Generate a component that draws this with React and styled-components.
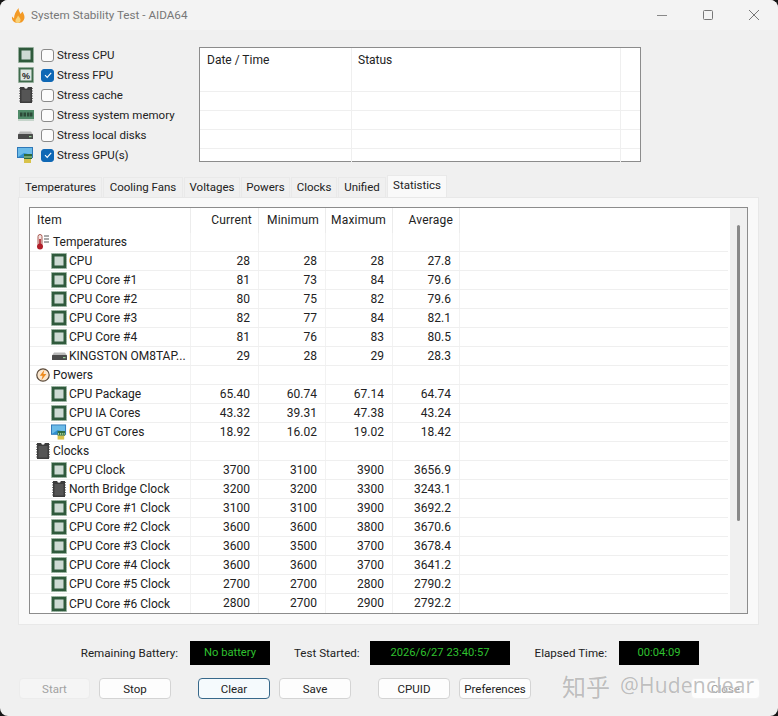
import React from 'react'
import styled, { createGlobalStyle } from 'styled-components'

const Global = createGlobalStyle`
html, body { margin: 0; padding: 0; background: #161616; }
body { font-family: Roboto, "Liberation Sans", sans-serif; font-size: 12px; color: #222; }
* { box-sizing: border-box; }
`

const CpuIcon = ({ size = 16 }) => (
  <svg width={size} height={size} viewBox="0 0 16 16">
    <rect x="0.5" y="0.5" width="15" height="15" fill="#3f6b4c" />
    <rect x="0" y="0" width="16" height="16" fill="none" stroke="#8fae96" strokeWidth="1" strokeDasharray="1 1" />
    <rect x="1" y="1" width="14" height="14" fill="#2f5a3c" />
    <rect x="3.5" y="3.5" width="9" height="9" fill="#cddad3" />
  </svg>
)

const FpuIcon = () => (
  <svg width="16" height="16" viewBox="0 0 16 16">
    <rect x="0.5" y="0.5" width="15" height="15" fill="#3f6b4c" />
    <rect x="0" y="0" width="16" height="16" fill="none" stroke="#8fae96" strokeWidth="1" strokeDasharray="1 1" />
    <rect x="2.5" y="2.5" width="11" height="11" fill="#dfe7e2" />
    <text x="8" y="11.5" fontSize="9" fontWeight="700" textAnchor="middle" fill="#222" fontFamily="Liberation Sans">%</text>
  </svg>
)

const ChipIcon = () => (
  <svg width="14" height="16" viewBox="0 0 14 16">
    <path d="M1 0H5.2A1.8 1.8 0 0 0 8.8 0H13V16H1Z" fill="#3c3c3c" />
    <path d="M0 1.5H1M0 4H1M0 6.5H1M0 9H1M0 11.5H1M0 14H1M13 1.5H14M13 4H14M13 6.5H14M13 9H14M13 11.5H14M13 14H14" stroke="#777" strokeWidth="1" />
    <rect x="2.5" y="3" width="9" height="11.5" fill="#555" />
  </svg>
)

const RamIcon = () => (
  <svg width="16" height="12" viewBox="0 0 16 12">
    <rect x="0" y="1" width="16" height="9" fill="#4f8a68" />
    <path d="M2 3.5h2.5v4H2zM5.5 3.5H8v4H5.5zM9 3.5h2.5v4H9zM12 3.5h2.5v4H12z" fill="#2c4a38" />
    <path d="M1 10v2M3 10v2M5 10v2M7 10v2M9 10v2M11 10v2M13 10v2M15 10v2" stroke="#9ab8a5" strokeWidth="1" />
  </svg>
)

const DiskIcon = () => (
  <svg width="15" height="8" viewBox="0 0 15 8">
    <path d="M2 0.5H13L15 3.5H0Z" fill="#b9b9b9" />
    <rect x="0" y="3" width="15" height="5" rx="0.5" fill="#4a4a4a" />
    <rect x="11" y="5" width="2.5" height="1.2" fill="#9ad29a" />
  </svg>
)

const GpuIcon = () => (
  <svg width="17" height="16" viewBox="0 0 17 16">
    <rect x="0" y="0" width="16" height="11" fill="#2f78b8" />
    <rect x="1" y="1" width="14" height="9" fill="#6bbbe8" />
    <path d="M1 10 L7 6 L15 8 V10Z" fill="#2f8fd0" />
    <rect x="7" y="7" width="8" height="5" fill="#2f6b3c" />
    <path d="M8 9v2M10 9v2M12 9v2M14 9v2" stroke="#b6dfa8" strokeWidth="1" />
    <rect x="7" y="12" width="7" height="4" fill="#d8c24a" />
  </svg>
)

const ThermoIcon = () => (
  <svg width="14" height="16" viewBox="0 0 14 16">
    <rect x="2" y="0.5" width="4" height="11" rx="2" fill="#f3e4e2" stroke="#a8584f" />
    <rect x="3.2" y="5" width="1.6" height="7" fill="#b0202a" />
    <circle cx="4" cy="12.5" r="3" fill="#b0202a" />
    <path d="M8 2h5M8 5h5M8 8h5" stroke="#555" strokeWidth="1" />
  </svg>
)

const PowerIcon = () => (
  <svg width="14" height="14" viewBox="0 0 14 14">
    <circle cx="7" cy="7" r="6.2" fill="#fbe6cd" stroke="#5a4a3a" strokeWidth="1.2" />
    <path d="M8.4 1.8 L3.8 7.8 H6.6 L5.4 12.2 L10.4 6 H7.4Z" fill="#ee8a1c" />
  </svg>
)

const FlameIcon = () => (
  <svg width="14" height="15" viewBox="0 0 14 15">
    <path d="M7 15C2.5 15 0.5 12 1 8.5L3 10.5C3 7 5 3 7.5 0C7.5 3 9 4 9.5 6L11.5 3.5C13.5 7 14 9.5 13 11.5C12 14 10 15 7 15Z" fill="#f39a26" />
    <path d="M7 15C5 15 4 13.5 4.5 12C5 10.5 6.5 9.5 7 7.5C8.5 9.5 10 11 9.5 12.8C9.2 14 8.2 15 7 15Z" fill="#f8d27a" />
  </svg>
)

const icons = {
  cpu: <CpuIcon />,
  fpu: <FpuIcon />,
  chip: <ChipIcon />,
  ram: <RamIcon />,
  disk: <DiskIcon />,
  gpu: <GpuIcon />,
  thermo: <ThermoIcon />,
  power: <PowerIcon />,
}

const stress = [
  ['cpu', 'Stress CPU', false],
  ['fpu', 'Stress FPU', true],
  ['chip', 'Stress cache', false],
  ['ram', 'Stress system memory', false],
  ['disk', 'Stress local disks', false],
  ['gpu', 'Stress GPU(s)', true],
]

const tabs = [
  ['Temperatures', 83],
  ['Cooling Fans', 80],
  ['Voltages', 56],
  ['Powers', 49],
  ['Clocks', 46],
  ['Unified', 48],
  ['Statistics', 60],
]

const rows = [
  ['thermo', 'Temperatures'],
  ['cpu', 'CPU', '28', '28', '28', '27.8'],
  ['cpu', 'CPU Core #1', '81', '73', '84', '79.6'],
  ['cpu', 'CPU Core #2', '80', '75', '82', '79.6'],
  ['cpu', 'CPU Core #3', '82', '77', '84', '82.1'],
  ['cpu', 'CPU Core #4', '81', '76', '83', '80.5'],
  ['disk', 'KINGSTON OM8TAP...', '29', '28', '29', '28.3'],
  ['power', 'Powers'],
  ['cpu', 'CPU Package', '65.40', '60.74', '67.14', '64.74'],
  ['cpu', 'CPU IA Cores', '43.32', '39.31', '47.38', '43.24'],
  ['gpu', 'CPU GT Cores', '18.92', '16.02', '19.02', '18.42'],
  ['chip', 'Clocks'],
  ['cpu', 'CPU Clock', '3700', '3100', '3900', '3656.9'],
  ['chip', 'North Bridge Clock', '3200', '3200', '3300', '3243.1'],
  ['cpu', 'CPU Core #1 Clock', '3100', '3100', '3900', '3692.2'],
  ['cpu', 'CPU Core #2 Clock', '3600', '3600', '3800', '3670.6'],
  ['cpu', 'CPU Core #3 Clock', '3600', '3500', '3700', '3678.4'],
  ['cpu', 'CPU Core #4 Clock', '3600', '3600', '3700', '3641.2'],
  ['cpu', 'CPU Core #5 Clock', '2700', '2700', '2800', '2790.2'],
  ['cpu', 'CPU Core #6 Clock', '2800', '2700', '2900', '2792.2'],
]

const App = () => {
  return (
    <Win>
      <Global />
      <TitleBar>
        <FlameIcon />
        <Title>System Stability Test - AIDA64</Title>
        <Controls>
          <svg width="14" height="14" viewBox="0 0 14 14"><path d="M4 7.5H14" stroke="#888" /></svg>
          <svg width="14" height="14" viewBox="0 0 14 14"><rect x="3.5" y="2.5" width="9" height="9" rx="1" fill="none" stroke="#777" /></svg>
          <svg width="14" height="14" viewBox="0 0 14 14"><path d="M2 2L12 12M12 2L2 12" stroke="#777" /></svg>
        </Controls>
      </TitleBar>

      <TopArea>
        <StressList>
          {stress.map(([icon, label, on]) => (
            <StressRow key={label}>
              <IconSlot>{icons[icon]}</IconSlot>
              <Check $on={on}>
                {on && <svg width="10" height="10" viewBox="0 0 10 10"><path d="M2 5.2L4.2 7.4L8.2 2.8" fill="none" stroke="#fff" strokeWidth="1.1" /></svg>}
              </Check>
              <span>{label}</span>
            </StressRow>
          ))}
        </StressList>
        <LogBox>
          <LogHead>
            <LogCol $w={152}>Date / Time</LogCol>
            <LogCol $w={269}>Status</LogCol>
            <LogCol />
          </LogHead>
          {[0, 1, 2, 3].map(i => (
            <LogRow key={i} $h={i === 3 ? 13 : 19}>
              <LogCol $w={152} />
              <LogCol $w={269} />
              <LogCol />
            </LogRow>
          ))}
        </LogBox>
      </TopArea>

      <TabStrip>
        {tabs.map(([t, w]) => <Tab key={t} $w={w} $active={t === 'Statistics'}>{t}</Tab>)}
      </TabStrip>

      <Panel>
        <ListView>
          <ListBody>
            <HeadRow>
              <HeadCell>Item</HeadCell>
              <HeadCell $num>Current</HeadCell>
              <HeadCell $num>Minimum</HeadCell>
              <HeadCell $num>Maximum</HeadCell>
              <HeadCell $num>Average</HeadCell>
            </HeadRow>
            {rows.map(([icon, name, ...vals], i) => (
              <Row key={i}>
                <NameCell $group={vals.length === 0}>
                  <RowIcon>{icons[icon]}</RowIcon>
                  <span>{name}</span>
                </NameCell>
                {[0, 1, 2, 3].map(n => <NumCell key={n}>{vals[n]}</NumCell>)}
              </Row>
            ))}
          </ListBody>
          <ScrollTrack>
            <ScrollThumb />
          </ScrollTrack>
        </ListView>
      </Panel>

      <StatusRow>
        <StatusLabel $w={100}>Remaining Battery:</StatusLabel>
        <Led $w={80}>No battery</Led>
        <StatusLabel $w={64}>Test Started:</StatusLabel>
        <Led $w={140}>2026/6/27 23:40:57</Led>
        <StatusLabel $w={73}>Elapsed Time:</StatusLabel>
        <Led $w={80}>00:04:09</Led>
      </StatusRow>

      <ButtonRow>
        <StartBtn disabled>Start</StartBtn>
        <Btn>Stop</Btn>
        <Btn $focus $gap={27}>Clear</Btn>
        <Btn>Save</Btn>
        <Btn $gap={27}>CPUID</Btn>
        <Btn>Preferences</Btn>
        <CloseBtn>Close</CloseBtn>
      </ButtonRow>

      <Watermark>
        <WatermarkCjk>知乎</WatermarkCjk>
        <span>@Hudenclear</span>
      </Watermark>
    </Win>
  )
}

export default App

const Win = styled.div`
position: relative;
width: 778px;
height: 716px;
overflow: hidden;
background: #f0f0f0;
border-radius: 8px;
`

const TitleBar = styled.div`
display: flex;
align-items: center;
height: 30px;
padding: 0 0 0 11px;
background: #f3f3f3;
`

const Title = styled.div`
margin-left: 6px;
color: #777;
font-size: 11.7px;
`

const Controls = styled.div`
display: flex;
gap: 33px;
margin-left: auto;
padding-right: 17px;
`

const TopArea = styled.div`
display: flex;
height: 143px;
padding: 17px 0 0 17px;
`

const StressList = styled.div`
width: 182px;
margin-top: -2px;
font-size: 11.5px;
`

const StressRow = styled.div`
display: flex;
align-items: center;
height: 20px;
`

const IconSlot = styled.div`
display: flex;
align-items: center;
justify-content: center;
width: 17px;
margin-right: 7px;
`

const Check = styled.div`
display: flex;
align-items: center;
justify-content: center;
width: 13px;
height: 13px;
margin-right: 3px;
border-radius: 3px;
background: ${p => (p.$on ? '#0f68b5' : '#fbfbfb')};
border: 1px solid ${p => (p.$on ? '#0f68b5' : '#8a8a8a')};
`

const LogBox = styled.div`
width: 442px;
height: 115px;
background: #fff;
border: 1px solid #8c8c8c;
`

const LogHead = styled.div`
display: flex;
height: 44px;
line-height: 25px;
border-bottom: 1px solid #efefef;
`

const LogRow = styled.div`
display: flex;
height: ${p => p.$h}px;
border-bottom: ${p => (p.$h === 19 ? '1px solid #efefef' : 'none')};
`

const LogCol = styled.div`
flex: ${p => (p.$w ? `0 0 ${p.$w}px` : '1')};
padding-left: 6px;
border-right: 1px solid #efefef;
&:first-child { padding-left: 7px; }
&:last-child { border-right: none; }
`

const TabStrip = styled.div`
display: flex;
align-items: flex-end;
height: 24px;
padding-left: 19px;
gap: 1px;
font-size: 11.5px;
`

const Tab = styled.div`
width: ${p => p.$w}px;
height: ${p => (p.$active ? 22 : 20)}px;
line-height: ${p => (p.$active ? 18 : 18)}px;
text-align: center;
background: ${p => (p.$active ? '#f9f9f9' : '#f0f0f0')};
border: 1px solid #e9e9e9;
border-bottom: none;
`

const Panel = styled.div`
height: 428px;
margin: 0 19px 0 18px;
padding: 9px 10px 11px 10px;
background: #f9f9f9;
border: 1px solid #e8e8e8;
`

const ListView = styled.div`
display: flex;
height: 407px;
background: #fff;
border: 1px solid #8c8c8c;
`

const ListBody = styled.div`
flex: 1;
overflow: hidden;
`

const colTemplate = `display: grid; grid-template-columns: 161px 68px 67px 67px 67px 1fr;`

const HeadRow = styled.div`
${colTemplate}
height: 25px;
line-height: 24px;
letter-spacing: 0.2px;
`

const HeadCell = styled.div`
padding: ${p => (p.$num ? '0 6px 0 0' : '0 0 0 7px')};
text-align: ${p => (p.$num ? 'right' : 'left')};
border-right: 1px solid #ececec;
`

const Row = styled.div`
${colTemplate}
height: 19px;
line-height: 18px;
margin-right: 2px;
border-bottom: 1px solid #efefef;
&:last-child { border-bottom: none; }
`

const NameCell = styled.div`
display: flex;
align-items: center;
padding-left: ${p => (p.$group ? 5 : 21)}px;
border-right: 1px solid #f2f2f2;
white-space: nowrap;
`

const RowIcon = styled.div`
display: flex;
align-items: center;
justify-content: center;
width: 16px;
margin-right: 2px;
`

const NumCell = styled.div`
padding-right: 8px;
text-align: right;
border-right: 1px solid #f2f2f2;
`

const ScrollTrack = styled.div`
position: relative;
width: 17px;
background: #f0f0f0;
`

const ScrollThumb = styled.div`
width: 3px;
height: 296px;
margin: 17px 0 0 7px;
border-radius: 2px;
background: #8a8a8a;
`

const StatusRow = styled.div`
display: flex;
align-items: center;
justify-content: flex-end;
height: 24px;
margin-top: 16px;
padding-right: 79px;
`

const StatusLabel = styled.div`
width: ${p => p.$w}px;
margin: 0 12px 0 24px;
font-size: 11.6px;
text-align: right;
white-space: nowrap;
`

const Led = styled.div`
width: ${p => p.$w}px;
height: 24px;
font-size: 11.2px;
line-height: 23px;
text-align: center;
color: #2fc02f;
background: #000;
`

const ButtonRow = styled.div`
display: flex;
gap: 9px;
height: 21px;
margin-top: 13px;
padding-left: 19px;
`

const Btn = styled.button`
width: 72px;
height: 21px;
margin-left: ${p => (p.$gap ? p.$gap - 9 : 0)}px;
padding: 0;
font: inherit;
font-size: 11.5px;
color: ${p => (p.disabled ? '#a2a2a2' : '#222')};
background: ${p => (p.disabled ? '#f5f5f5' : p.$focus ? '#f5fafd' : '#fdfdfd')};
border: 1px solid ${p => (p.disabled ? '#ececec' : p.$focus ? '#37688a' : '#d4d4d4')};
border-radius: 4px;
`

const StartBtn = styled(Btn)`
width: 71px;
`

const CloseBtn = styled(Btn)`
margin-left: auto;
margin-right: 18px;
width: 69px;
color: #999;
border-color: #f2f2f2;
`

const Watermark = styled.div`
position: absolute;
left: 562px;
top: 669px;
display: flex;
align-items: center;
gap: 10px;
height: 32px;
font-family: "Open Sans", sans-serif;
font-size: 21px;
letter-spacing: 0.2px;
white-space: nowrap;
color: rgba(150, 150, 150, 0.62);
text-shadow: 0 0 1px rgba(255, 255, 255, 0.8);
`

const WatermarkCjk = styled.span`
font-family: "Noto Sans CJK SC", sans-serif;
font-size: 24px;
letter-spacing: 0;
`
